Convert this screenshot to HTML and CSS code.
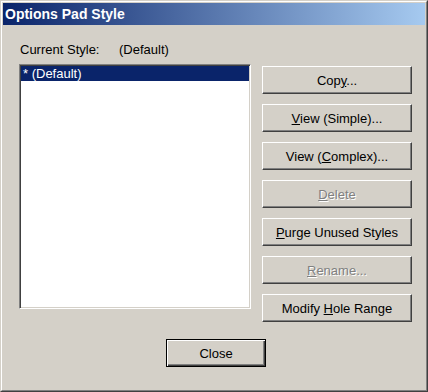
FILE: index.html
```html
<!DOCTYPE html>
<html lang="en">
  <head>
    <meta charset="UTF-8" />
    <title>Options Pad Style</title>
    <link rel="stylesheet" href="styles.css">
  </head>
  <body>
    <div class="window">
      <div class="frame">
        <div class="titlebar">Options Pad Style</div>

        <div class="content">
          <div class="current">
            <span class="label">Current Style:</span>
            <span>(Default)</span>
          </div>

          <div class="main">
            <div class="listbox">
              <div class="item selected">* (Default)</div>
            </div>

            <div class="actions">
              <button type="button">Cop<u>y</u>...</button>
              <button type="button"><u>V</u>iew (Simple)...</button>
              <button type="button">View (<u>C</u>omplex)...</button>
              <button type="button" disabled><u>D</u>elete</button>
              <button type="button"><u>P</u>urge Unused Styles</button>
              <button type="button" disabled><u>R</u>ename...</button>
              <button type="button">Modify <u>H</u>ole Range</button>
            </div>
          </div>

          <div class="footer">
            <button type="button" class="default">Close</button>
          </div>
        </div>
      </div>
    </div>
  </body>
</html>
```

FILE: styles.css
```css
/* Global styles */
* {
  margin: 0;
  padding: 0;
  box-sizing: border-box;
}
body {
  color: #000;
  font: 13px/15px "Liberation Sans", Arial, sans-serif;
  background: #d4d0c8;
}
button {
  font: inherit;
  color: inherit;
  background: none;
  border: none;
}

/* Window frame */
.window {
  width: 428px;
  height: 392px;
  border: 1px solid;
  border-color: #d4d0c8 #404040 #404040 #d4d0c8;
}
.frame {
  height: 100%;
  padding: 1px;
  display: flex;
  flex-direction: column;
  border: 1px solid;
  border-color: #fff #808080 #808080 #fff;
}
.titlebar {
  height: 22px;
  padding: 0 2px;
  display: flex;
  align-items: center;
  color: #fff;
  font-size: 14px;
  font-weight: bold;
  background: linear-gradient(to right, #0a246a, #a6caf0);
}

/* Dialog body */
.content {
  flex: 1;
  display: flex;
  flex-direction: column;
  padding: 17px 13px 0 16px;
}
.current {
  display: flex;
  height: 15px;
  padding-left: 1px;
}
.current .label {
  width: 99px;
}
.main {
  display: flex;
  align-items: flex-start;
  margin-top: 7px;
}
.listbox {
  width: 232px;
  height: 245px;
  padding: 1px;
  background: #fff;
  border: 1px solid;
  border-color: #808080 #fff #fff #808080;
  box-shadow: inset 1px 1px 0 #404040, inset -1px -1px 0 #d4d0c8;
}
.item {
  height: 15px;
  padding-left: 2px;
  white-space: nowrap;
}
.item.selected {
  color: #fff;
  background: #0a246a;
}

/* Buttons */
.actions {
  flex: 1;
  gap: 10px;
  display: flex;
  flex-direction: column;
  margin: 2px 0 0 11px;
}
.actions button,
.footer button {
  height: 28px;
  background: #d4d0c8;
  border: 1px solid;
  border-color: #fff #404040 #404040 #fff;
  box-shadow: inset -1px -1px 0 #808080;
}
.actions button:disabled {
  color: #808080;
  text-shadow: 1px 1px 0 #fff;
}
.footer {
  display: flex;
  justify-content: center;
  margin-top: 17px;
  padding-left: 1px;
}
.footer button {
  width: 100px;
}
.footer button.default {
  border-color: #000;
  box-shadow: inset 1px 1px 0 #fff, inset -1px -1px 0 #404040,
    inset -2px -2px 0 #808080;
}
```
